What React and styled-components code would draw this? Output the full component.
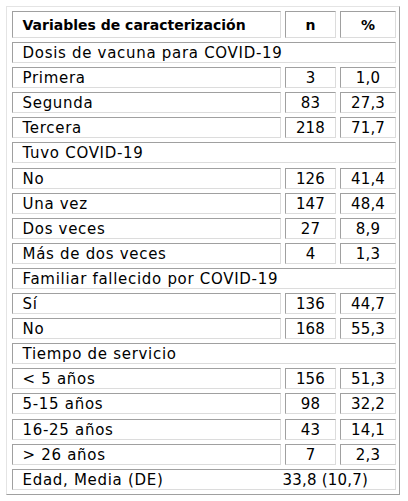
import React from "react";
import styled, { createGlobalStyle } from "styled-components";

const Global = createGlobalStyle`
  html, body {
    margin: 0;
    padding: 0;
    background: #fff;
  }
  body {
    font-family: "DejaVu Sans", Verdana, sans-serif;
    color: #000;
  }
`;

const Page = styled.div`
  padding: 6px 0 0 6px;
`;

const Table = styled.div`
  display: grid;
  grid-template-columns: 269px 51px 56px;
  grid-template-rows: 27px;
  grid-auto-rows: 21px;
  column-gap: 4px;
  row-gap: 4.1px;
  padding: 4px 3px 4px 5px;
  box-sizing: border-box;
  width: 394px;
  border: 1px solid;
  border-color: #e4e4e4 #a0a0a0 #a0a0a0 #e4e4e4;
`;

const Cell = styled.div`
  box-sizing: border-box;
  border: 1px solid;
  border-color: #a0a0a0 #dcdcdc #dcdcdc #a0a0a0;
  display: flex;
  align-items: center;
  justify-content: ${p => (p.$center ? "center" : "flex-start")};
  padding-left: ${p => (p.$center ? "0" : "9.5px")};
  padding-top: ${p => (p.$head ? "0" : "1px")};
  grid-column: ${p => p.$span || "auto"};
  font-size: ${p => (p.$head ? "14px" : "15px")};
  letter-spacing: ${p => (p.$head ? "0" : p.$center ? "0.2px" : "0.7px")};
  font-weight: ${p => (p.$head ? "bold" : "normal")};
  white-space: nowrap;
  overflow: hidden;
`;

const Label = styled.span`
  width: 260px;
  flex: none;
`;

const Value = styled.span`
  letter-spacing: 0.2px;
`;

const sections = [
  {
    title: "Dosis de vacuna para COVID-19",
    rows: [
      ["Primera", "3", "1,0"],
      ["Segunda", "83", "27,3"],
      ["Tercera", "218", "71,7"],
    ],
  },
  {
    title: "Tuvo COVID-19",
    rows: [
      ["No", "126", "41,4"],
      ["Una vez", "147", "48,4"],
      ["Dos veces", "27", "8,9"],
      ["Más de dos veces", "4", "1,3"],
    ],
  },
  {
    title: "Familiar fallecido por COVID-19",
    rows: [
      ["Sí", "136", "44,7"],
      ["No", "168", "55,3"],
    ],
  },
  {
    title: "Tiempo de servicio",
    rows: [
      ["< 5 años", "156", "51,3"],
      ["5-15 años", "98", "32,2"],
      ["16-25 años", "43", "14,1"],
      ["> 26 años", "7", "2,3"],
    ],
  },
];

export default function App() {
  return (
    <Page>
      <Global />
      <Table>
        <Cell $head>Variables de caracterización</Cell>
        <Cell $head $center>n</Cell>
        <Cell $head $center>%</Cell>
        {sections.map(s => (
          <React.Fragment key={s.title}>
            <Cell $span="1 / span 3">{s.title}</Cell>
            {s.rows.map(r => (
              <React.Fragment key={s.title + r[0]}>
                <Cell>{r[0]}</Cell>
                <Cell $center>{r[1]}</Cell>
                <Cell $center>{r[2]}</Cell>
              </React.Fragment>
            ))}
          </React.Fragment>
        ))}
        <Cell $span="1 / span 3">
          <Label>Edad, Media (DE)</Label>
          <Value>33,8 (10,7)</Value>
        </Cell>
      </Table>
    </Page>
  );
}
